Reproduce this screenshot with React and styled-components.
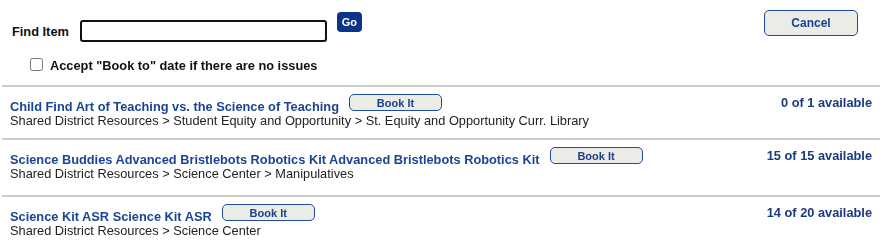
import React from 'react';
import styled, { createGlobalStyle } from 'styled-components';

const GlobalStyle = createGlobalStyle`
  html, body {
    margin: 0;
    padding: 0;
    background: #ffffff;
  }
  body {
    font-family: "Liberation Sans", Arial, sans-serif;
    font-size: 12.8px;
    color: #222222;
  }
`;

const Page = styled.div`
  width: 896px;
`;

const TopBar = styled.div`
  display: flex;
  justify-content: space-between;
  align-items: flex-start;
  height: 36px;
  padding: 10px 38px 0 12px;
`;

const FindGroup = styled.div`
  display: flex;
  align-items: flex-start;
`;

const FindLabel = styled.label`
  font-weight: bold;
  line-height: 15px;
  margin-top: 14px;
  color: #111;
`;

const SearchInput = styled.input`
  box-sizing: border-box;
  width: 247px;
  height: 22px;
  margin: 10px 0 0 11px;
  border: 2px solid #111;
  border-radius: 3px;
  padding: 0 3px;
  font-family: "Liberation Sans", Arial, sans-serif;
  font-size: 13px;
  caret-color: #000;
  outline: none;
`;

const GoButton = styled.button`
  box-sizing: border-box;
  width: 25px;
  height: 20px;
  margin: 2px 0 0 10px;
  padding: 0;
  border: none;
  border-radius: 4px;
  background: #0a3487;
  color: #fff;
  font-family: "Liberation Sans", Arial, sans-serif;
  font-weight: bold;
  font-size: 11px;
`;

const PillButton = styled.button`
  box-sizing: border-box;
  width: ${p => p.w}px;
  height: ${p => p.h}px;
  padding: 0;
  border: 1px solid #1e4c9e;
  border-radius: 5px;
  background: #ecece6;
  color: #1a3f8f;
  font-family: "Liberation Sans", Arial, sans-serif;
  font-weight: bold;
  font-size: ${p => p.fs}px;
  flex-shrink: 0;
`;

const CheckRow = styled.div`
  display: flex;
  align-items: center;
  height: 15px;
  margin-top: 12px;
  padding-left: 30px;
  gap: 7px;
  font-weight: bold;
  color: #111;
`;

const Checkbox = styled.input`
  width: 13px;
  height: 13px;
  margin: -2px 0 0 0;
`;

const List = styled.div`
  margin: 12px 16px 0 2px;
`;

const Row = styled.div`
  display: flex;
  justify-content: space-between;
  align-items: flex-start;
  border-top: 2px solid #cccccc;
  padding: 9px 8px ${p => p.pb}px 8px;
`;

const Info = styled.div`
  display: flex;
  flex-direction: column;
`;

const TitleLine = styled.div`
  display: flex;
  align-items: flex-start;
  gap: 10px;
  height: 17px;
  & > button {
    margin-top: -2px;
  }
`;

const Title = styled.a`
  margin-top: 2px;
  line-height: 17px;
  color: #1a4594;
  font-weight: bold;
  text-decoration: none;
  white-space: nowrap;
`;

const Path = styled.div`
  line-height: 16px;
  color: #222;
  white-space: nowrap;
`;

const Count = styled.div`
  line-height: 17px;
  margin-top: -2px;
  font-weight: bold;
  color: #1b3a80;
  white-space: nowrap;
`;

const items = [
  {
    title: 'Child Find Art of Teaching vs. the Science of Teaching',
    path: 'Shared District Resources > Student Equity and Opportunity > St. Equity and Opportunity Curr. Library',
    count: '0 of 1 available',
    pb: 9,
  },
  {
    title: 'Science Buddies Advanced Bristlebots Robotics Kit Advanced Bristlebots Robotics Kit',
    path: 'Shared District Resources > Science Center > Manipulatives',
    count: '15 of 15 available',
    pb: 13,
  },
  {
    title: 'Science Kit ASR Science Kit ASR',
    path: 'Shared District Resources > Science Center',
    count: '14 of 20 available',
    pb: 9,
  },
];

export default function App() {
  return (
    <Page>
      <GlobalStyle />
      <TopBar>
        <FindGroup>
          <FindLabel htmlFor="find">Find Item</FindLabel>
          <SearchInput id="find" type="text" autoFocus />
          <GoButton>Go</GoButton>
        </FindGroup>
        <PillButton w={94} h={26} fs={12}>Cancel</PillButton>
      </TopBar>

      <CheckRow>
        <Checkbox type="checkbox" id="bookto" />
        <label htmlFor="bookto">Accept "Book to" date if there are no issues</label>
      </CheckRow>

      <List>
        {items.map(item => (
          <Row key={item.title} pb={item.pb}>
            <Info>
              <TitleLine>
                <Title href="#">{item.title}</Title>
                <PillButton w={93} h={17} fs={11}>Book It</PillButton>
              </TitleLine>
              <Path>{item.path}</Path>
            </Info>
            <Count>{item.count}</Count>
          </Row>
        ))}
      </List>
    </Page>
  );
}
